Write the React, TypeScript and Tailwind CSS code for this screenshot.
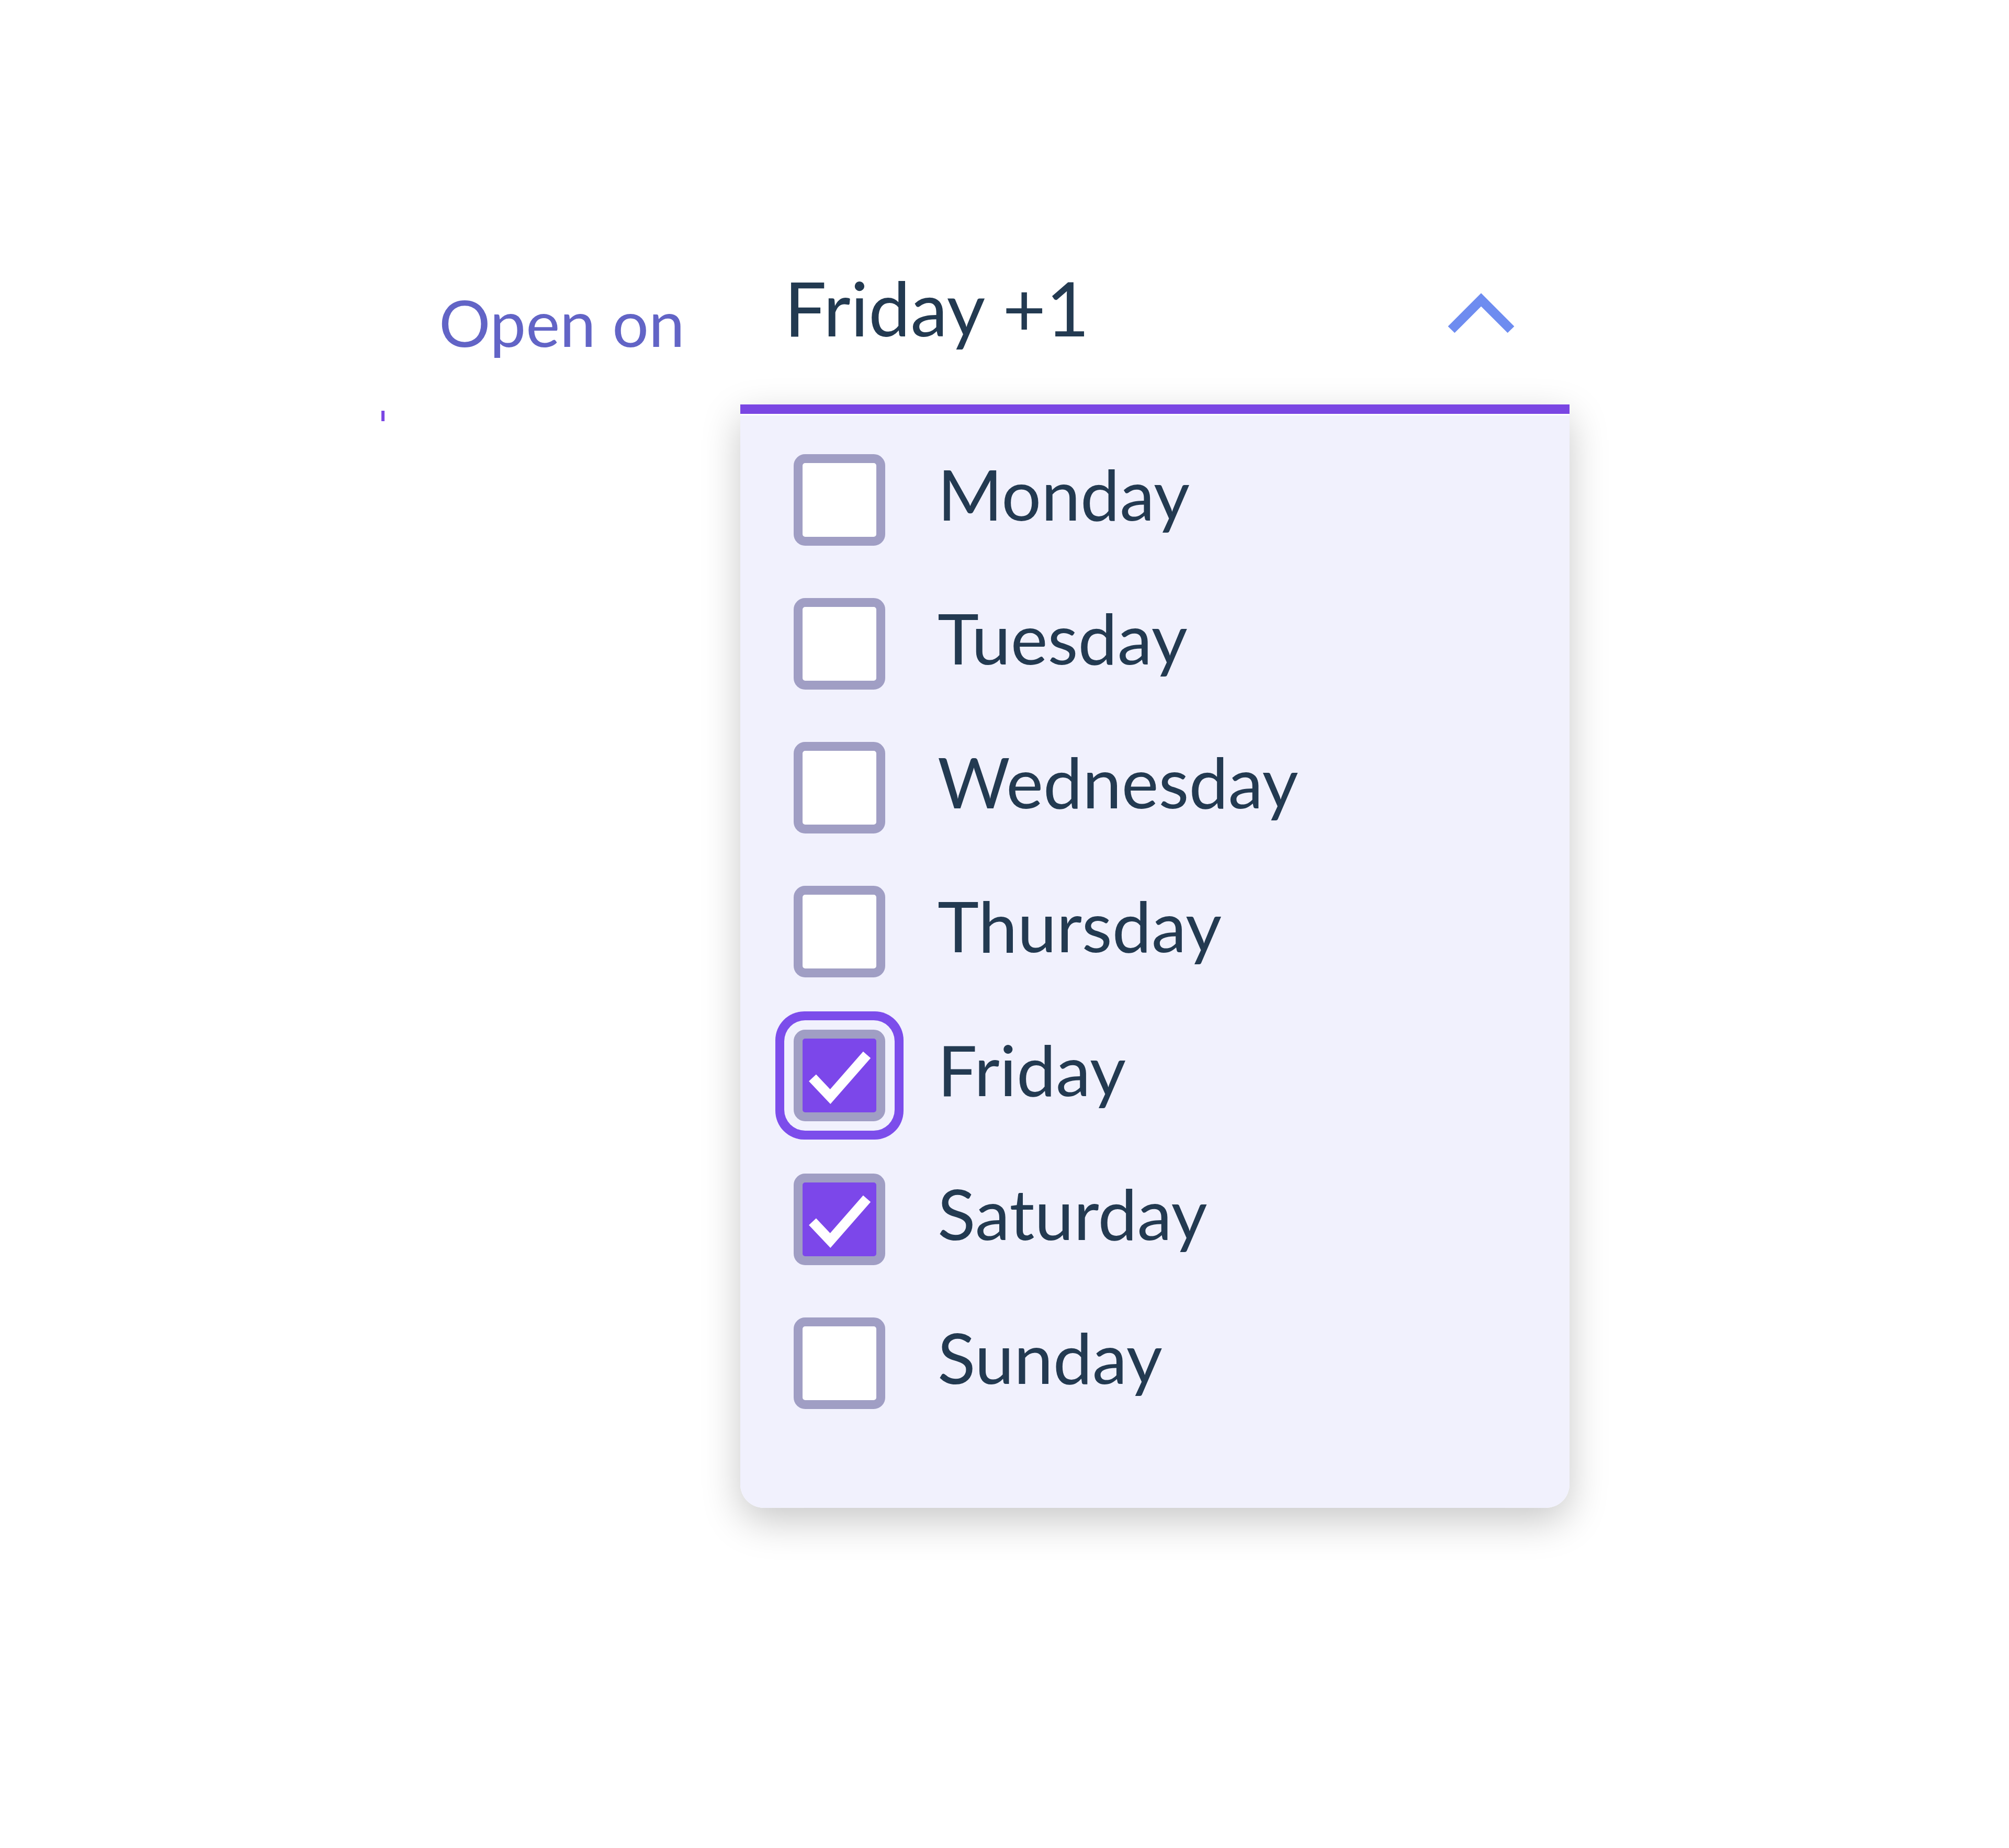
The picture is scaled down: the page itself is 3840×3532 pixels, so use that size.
import React from "react";

const days = [
  { name: "Monday", checked: false, focus: false },
  { name: "Tuesday", checked: false, focus: false },
  { name: "Wednesday", checked: false, focus: false },
  { name: "Thursday", checked: false, focus: false },
  { name: "Friday", checked: true, focus: true },
  { name: "Saturday", checked: true, focus: false },
  { name: "Sunday", checked: false, focus: false },
];

function Box({ checked, focus }: { checked: boolean; focus: boolean }) {
  return (
    <div
      className={
        "relative w-[175px] h-[175px] shrink-0 rounded-[22px] border-[17px] border-[#A09EC4] " +
        (checked ? "bg-[#7C47EA] " : "bg-white ") +
        (focus ? "ring-[17px] ring-[#7C4DEB] ring-offset-[18px] ring-offset-[#F1F1FD]" : "")
      }
    >
      {checked && (
        <svg className="absolute left-[-17px] top-[-17px]" width="175" height="175" viewBox="0 0 175 175">
          <polyline points="36,92 70,128 140,48" fill="none" stroke="white" strokeWidth="19" strokeLinecap="butt" strokeLinejoin="miter" />
        </svg>
      )}
    </div>
  );
}

export default function App() {
  return (
    <div className="min-h-[3532px] bg-white pt-[480px] font-['Lato',sans-serif]">
      <div className="flex ml-[729px]">
        <div className="w-[686px] flex flex-col">
          <div className="pl-[110px] pt-[74px] text-[123px] leading-none text-[#6264C6]">Open on</div>
          <div className="mt-[108px] w-[6px] h-[20px] bg-[#7B47E4]" />
        </div>
        <div className="w-[1585px] flex flex-col">
          <div className="h-[293px] flex items-start justify-between pl-[84px] pr-[105px]">
            <div className="pt-[36px] text-[143px] leading-none text-[#233A51]">Friday +1</div>
            <svg className="mt-[80px]" width="128" height="78" viewBox="0 0 128 78">
              <polyline points="7,70 64,13 121,70" fill="none" stroke="#6E8CF0" strokeWidth="18" strokeLinecap="butt" strokeLinejoin="miter" />
            </svg>
          </div>
          <div className="flex flex-col bg-white rounded-b-[45px] shadow-[0_25px_75px_rgba(0,0,0,0.22)]">
            <div className="h-[18px] bg-[#7A46E3]" />
            <div className="h-[3px] bg-white" />
            <div className="bg-[#F1F1FD] rounded-b-[45px] pl-[102px] pt-[24px] pb-[139px] flex flex-col">
              {days.map((d) => (
                <div key={d.name} className="h-[275px] flex items-center gap-[100px]">
                  <Box checked={d.checked} focus={d.focus} />
                  <span className="pb-[24px] text-[134px] leading-none text-[#233A51]">{d.name}</span>
                </div>
              ))}
            </div>
          </div>
        </div>
      </div>
    </div>
  );
}
